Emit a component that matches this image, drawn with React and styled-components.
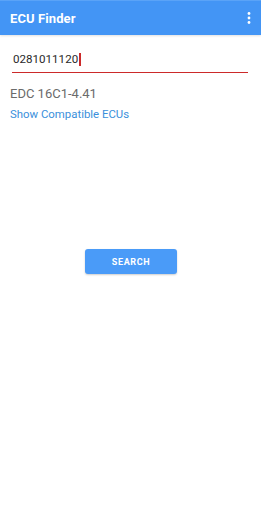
import React from "react";
import styled, { createGlobalStyle } from "styled-components";

const Global = createGlobalStyle`
  html, body { margin: 0; padding: 0; background: #fff; }
  body { font-family: Roboto, "Noto Sans", Arial, sans-serif; }
`;

const Page = styled.div`
  width: 261px;
  height: 512px;
  display: flex;
  flex-direction: column;
  background: #fff;
`;

const AppBar = styled.header`
  height: 35px;
  background: #4395f5;
  border-top: 1px solid #5aa3f7;
  box-sizing: border-box;
  display: flex;
  align-items: center;
  justify-content: space-between;
  padding: 0 10px 0 10px;
  box-shadow: 0 1px 2px rgba(0,0,0,0.12);
`;

const Title = styled.h1`
  margin: 0;
  color: #fff;
  font-size: 13px;
  font-weight: 700;
  letter-spacing: 0.1px;
`;

const Content = styled.main`
  display: flex;
  flex-direction: column;
  padding: 0 13px 0 10px;
`;

const Field = styled.div`
  margin-top: 16px;
  margin-left: 2px;
  border-bottom: 1.5px solid #cc2a2a;
  padding: 0 0 4px 1px;
  display: flex;
  align-items: center;
  height: 17px;
`;

const InputText = styled.span`
  font-size: 11.6px;
  color: #2a2a2a;
  line-height: 17px;
`;

const Caret = styled.span`
  display: inline-block;
  width: 1.5px;
  height: 13px;
  background: #cc2a2a;
  margin-left: 1px;
`;

const Result = styled.div`
  margin-top: 13px;
  font-size: 13px;
  color: #6b6b6b;
  line-height: 16px;
`;

const Link = styled.a`
  margin-top: 5px;
  font-size: 11.4px;
  color: #3a8fdb;
  line-height: 14px;
  text-decoration: none;
`;

const ButtonRow = styled.div`
  display: flex;
  justify-content: center;
  margin-top: 128px;
`;

const Button = styled.button`
  width: 92px;
  height: 25px;
  border: none;
  border-radius: 3px;
  background: #4a9bf8;
  color: #fff;
  font-family: Roboto, Arial, sans-serif;
  font-size: 9px;
  font-weight: 700;
  letter-spacing: 0.6px;
  box-shadow: 0 1px 2px rgba(0,0,0,0.2);
  margin-left: 1px;
`;

const Menu = () => (
  <svg width="4" height="12" viewBox="0 0 4 12">
    <circle cx="2" cy="1.5" r="1.4" fill="#fff" />
    <circle cx="2" cy="6" r="1.4" fill="#fff" />
    <circle cx="2" cy="10.5" r="1.4" fill="#fff" />
  </svg>
);

export default function App() {
  return (
    <>
      <Global />
      <Page>
        <AppBar>
          <Title>ECU Finder</Title>
          <Menu />
        </AppBar>
        <Content>
          <Field>
            <InputText>0281011120</InputText>
            <Caret />
          </Field>
          <Result>EDC 16C1-4.41</Result>
          <Link>Show Compatible ECUs</Link>
        </Content>
        <ButtonRow>
          <Button>SEARCH</Button>
        </ButtonRow>
      </Page>
    </>
  );
}
